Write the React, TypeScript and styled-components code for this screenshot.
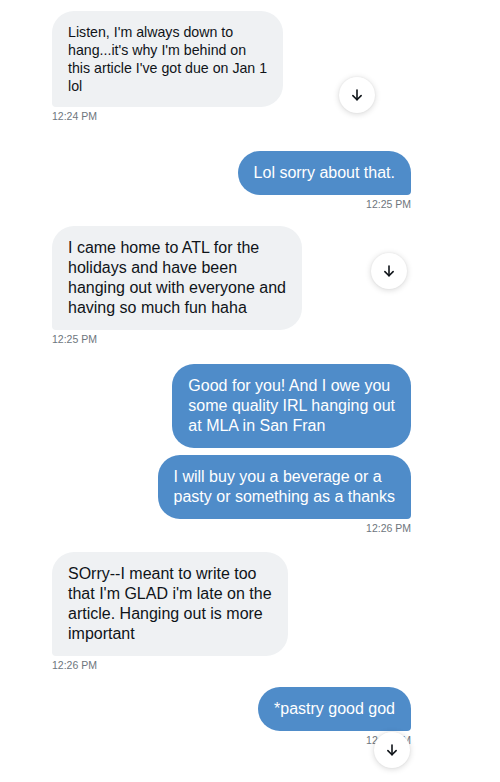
import { FC } from "react"
import styled, { createGlobalStyle } from "styled-components"

type Message = {
  id: number
  side: "in" | "out"
  lines: string[]
  tail?: boolean
  tight?: boolean
}

type Group = {
  id: number
  space: number
  messages: Message[]
  time: string
  side: "in" | "out"
}

const groups: Group[] = [
  {
    id: 1,
    space: 0,
    side: "in",
    time: "12:24 PM",
    messages: [
      {
        id: 1,
        side: "in",
        tail: true,
        tight: true,
        lines: ["Listen, I'm always down to", "hang...it's why I'm behind on", "this article I've got due on Jan 1", "lol"],
      },
    ],
  },
  {
    id: 2,
    space: 28,
    side: "out",
    time: "12:25 PM",
    messages: [{ id: 2, side: "out", tail: true, lines: ["Lol sorry about that."] }],
  },
  {
    id: 3,
    space: 15,
    side: "in",
    time: "12:25 PM",
    messages: [
      {
        id: 3,
        side: "in",
        tail: true,
        lines: ["I came home to ATL for the", "holidays and have been", "hanging out with everyone and", "having so much fun haha"],
      },
    ],
  },
  {
    id: 4,
    space: 18,
    side: "out",
    time: "12:26 PM",
    messages: [
      { id: 4, side: "out", lines: ["Good for you! And I owe you", "some quality IRL hanging out", "at MLA in San Fran"] },
      { id: 5, side: "out", tail: true, lines: ["I will buy you a beverage or a", "pasty or something as a thanks"] },
    ],
  },
  {
    id: 5,
    space: 17,
    side: "in",
    time: "12:26 PM",
    messages: [
      {
        id: 6,
        side: "in",
        tail: true,
        lines: ["SOrry--I meant to write too", "that I'm GLAD i'm late on the", "article. Hanging out is more", "important"],
      },
    ],
  },
  {
    id: 6,
    space: 15,
    side: "out",
    time: "12:26 PM",
    messages: [{ id: 7, side: "out", tail: true, lines: ["*pastry good god"] }],
  },
]

// floating "jump to latest" buttons sitting over the thread
const jumpButtons = [
  { id: 1, x: 339, y: 77 },
  { id: 2, x: 371, y: 253 },
  { id: 3, x: 374, y: 732 },
]

const ArrowDown: FC = () => (
  <svg width="16" height="16" viewBox="0 0 24 24" fill="none" stroke="#0f1419" strokeWidth="2.4" strokeLinecap="round" strokeLinejoin="round">
    <path d="M12 4.5v14.5" />
    <path d="M5.8 13 12 19.2 18.2 13" />
  </svg>
)

export default function App() {
  return (
    <>
      <GlobalStyle />
      <Page>
        <Thread>
          {groups.map((g) => (
            <MessageGroup key={g.id} $space={g.space} $side={g.side}>
              {g.messages.map((m) => (
                <Bubble key={m.id} $side={m.side} $tail={!!m.tail} $tight={!!m.tight}>
                  {m.lines.map((l, i) => (
                    <Line key={i}>{l}</Line>
                  ))}
                </Bubble>
              ))}
              <Time>{g.time}</Time>
            </MessageGroup>
          ))}
        </Thread>
        {jumpButtons.map((b) => (
          <JumpButton key={b.id} style={{ left: b.x, top: b.y }}>
            <ArrowDown />
          </JumpButton>
        ))}
      </Page>
    </>
  )
}

const GlobalStyle = createGlobalStyle`
  html, body {
    margin: 0;
    padding: 0;
    background: #ffffff;
  }
  body {
    font-family: "Liberation Sans", Arial, sans-serif;
    -webkit-font-smoothing: antialiased;
  }
`

const Page = styled.div`
  position: relative;
  width: 500px;
  height: 782px;
  overflow: hidden;
  background: #ffffff;
  padding: 11px 89px 0 52px;
  box-sizing: border-box;
`

const Thread = styled.div`
  display: flex;
  flex-direction: column;
`

const MessageGroup = styled.div<{ $space: number; $side: "in" | "out" }>`
  display: flex;
  flex-direction: column;
  align-items: ${({ $side }) => ($side === "in" ? "flex-start" : "flex-end")};
  gap: 7px;
  margin-top: ${({ $space }) => $space}px;
`

const Bubble = styled.div<{ $side: "in" | "out"; $tail: boolean; $tight: boolean }>`
  display: flex;
  flex-direction: column;
  padding: 12px 16px;
  border-radius: 22px;
  font-size: ${({ $tight }) => ($tight ? 14.2 : 16)}px;
  line-height: ${({ $tight }) => ($tight ? 18 : 20)}px;
  background: ${({ $side }) => ($side === "in" ? "#eff1f3" : "#4f8cc9")};
  color: ${({ $side }) => ($side === "in" ? "#0f1419" : "#ffffff")};
  ${({ $side, $tail }) =>
    $tail && ($side === "in" ? "border-bottom-left-radius: 4px;" : "border-bottom-right-radius: 4px;")}
`

const Line = styled.span`
  white-space: nowrap;
`

const Time = styled.div`
  font-size: 10.5px;
  line-height: 14px;
  color: #6e767d;
  margin-top: -5px;
`

const JumpButton = styled.div`
  position: absolute;
  width: 36px;
  height: 36px;
  border-radius: 50%;
  background: #ffffff;
  box-shadow: 0 1px 6px rgba(0, 0, 0, 0.16), 0 0 2px rgba(0, 0, 0, 0.06);
  display: flex;
  align-items: center;
  justify-content: center;
`
